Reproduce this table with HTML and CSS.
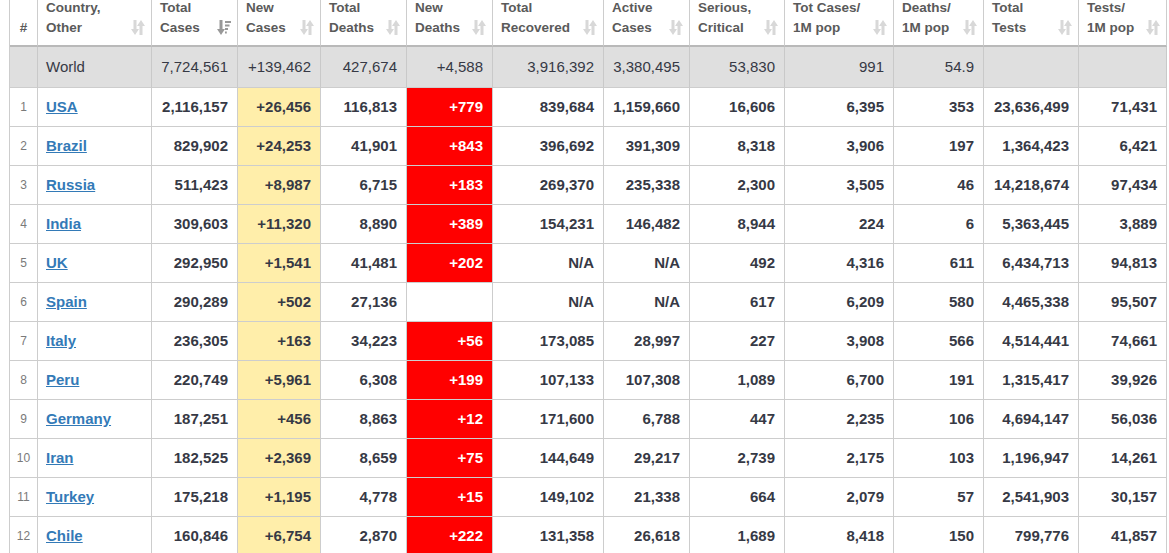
FILE: index.html
```html
<!DOCTYPE html>
<html lang="en">
<head>
<meta charset="utf-8">
<title>Coronavirus table</title>
<link rel="stylesheet" href="styles.css">
</head>
<body>
<div class="wrap">
<table class="cv">
<thead>
<tr>
  <th class="w-num num-h">#</th>
  <th class="w-country"><div class="hd"><span>Country,<br>Other</span><svg class="si" viewBox="0 0 14 15"><rect x="2.5" y="0" width="3" height="10"/><polygon points="0,9 8,9 4,15"/><polygon points="6,6 14,6 10,0"/><rect x="8.5" y="5" width="3" height="10"/></svg></div></th>
  <th class="w-86"><div class="hd"><span>Total<br>Cases</span><svg class="si sorted" viewBox="0 0 14 15"><rect x="2.5" y="0" width="3" height="10"/><polygon points="0,9 8,9 4,15"/><rect x="8" y="1" width="6" height="2"/><rect x="8" y="4.5" width="4.5" height="2"/><rect x="8" y="8" width="3" height="2"/><rect x="8" y="11.5" width="1.8" height="2"/></svg></div></th>
  <th class="w-83"><div class="hd"><span>New<br>Cases</span><svg class="si" viewBox="0 0 14 15"><rect x="2.5" y="0" width="3" height="10"/><polygon points="0,9 8,9 4,15"/><polygon points="6,6 14,6 10,0"/><rect x="8.5" y="5" width="3" height="10"/></svg></div></th>
  <th class="w-86"><div class="hd"><span>Total<br>Deaths</span><svg class="si" viewBox="0 0 14 15"><rect x="2.5" y="0" width="3" height="10"/><polygon points="0,9 8,9 4,15"/><polygon points="6,6 14,6 10,0"/><rect x="8.5" y="5" width="3" height="10"/></svg></div></th>
  <th class="w-86"><div class="hd"><span>New<br>Deaths</span><svg class="si" viewBox="0 0 14 15"><rect x="2.5" y="0" width="3" height="10"/><polygon points="0,9 8,9 4,15"/><polygon points="6,6 14,6 10,0"/><rect x="8.5" y="5" width="3" height="10"/></svg></div></th>
  <th class="w-111"><div class="hd"><span>Total<br>Recovered</span><svg class="si" viewBox="0 0 14 15"><rect x="2.5" y="0" width="3" height="10"/><polygon points="0,9 8,9 4,15"/><polygon points="6,6 14,6 10,0"/><rect x="8.5" y="5" width="3" height="10"/></svg></div></th>
  <th class="w-86"><div class="hd"><span>Active<br>Cases</span><svg class="si" viewBox="0 0 14 15"><rect x="2.5" y="0" width="3" height="10"/><polygon points="0,9 8,9 4,15"/><polygon points="6,6 14,6 10,0"/><rect x="8.5" y="5" width="3" height="10"/></svg></div></th>
  <th class="w-95"><div class="hd"><span>Serious,<br>Critical</span><svg class="si" viewBox="0 0 14 15"><rect x="2.5" y="0" width="3" height="10"/><polygon points="0,9 8,9 4,15"/><polygon points="6,6 14,6 10,0"/><rect x="8.5" y="5" width="3" height="10"/></svg></div></th>
  <th class="w-109"><div class="hd"><span>Tot&nbsp;Cases/<br>1M pop</span><svg class="si" viewBox="0 0 14 15"><rect x="2.5" y="0" width="3" height="10"/><polygon points="0,9 8,9 4,15"/><polygon points="6,6 14,6 10,0"/><rect x="8.5" y="5" width="3" height="10"/></svg></div></th>
  <th class="w-90"><div class="hd"><span>Deaths/<br>1M pop</span><svg class="si" viewBox="0 0 14 15"><rect x="2.5" y="0" width="3" height="10"/><polygon points="0,9 8,9 4,15"/><polygon points="6,6 14,6 10,0"/><rect x="8.5" y="5" width="3" height="10"/></svg></div></th>
  <th class="w-95"><div class="hd"><span>Total<br>Tests</span><svg class="si" viewBox="0 0 14 15"><rect x="2.5" y="0" width="3" height="10"/><polygon points="0,9 8,9 4,15"/><polygon points="6,6 14,6 10,0"/><rect x="8.5" y="5" width="3" height="10"/></svg></div></th>
  <th class="w-88"><div class="hd"><span>Tests/<br>1M pop</span><svg class="si" viewBox="0 0 14 15"><rect x="2.5" y="0" width="3" height="10"/><polygon points="0,9 8,9 4,15"/><polygon points="6,6 14,6 10,0"/><rect x="8.5" y="5" width="3" height="10"/></svg></div></th>
</tr>
</thead>
<tbody>
<tr class="world">
  <td class="rank"></td><td class="country">World</td><td>7,724,561</td><td>+139,462</td><td>427,674</td><td>+4,588</td><td>3,916,392</td><td>3,380,495</td><td>53,830</td><td>991</td><td>54.9</td><td></td><td></td>
</tr>
<tr><td class="rank">1</td><td class="country"><a href="#">USA</a></td><td>2,116,157</td><td class="nc">+26,456</td><td>116,813</td><td class="nd">+779</td><td>839,684</td><td>1,159,660</td><td>16,606</td><td>6,395</td><td>353</td><td>23,636,499</td><td>71,431</td></tr>
<tr><td class="rank">2</td><td class="country"><a href="#">Brazil</a></td><td>829,902</td><td class="nc">+24,253</td><td>41,901</td><td class="nd">+843</td><td>396,692</td><td>391,309</td><td>8,318</td><td>3,906</td><td>197</td><td>1,364,423</td><td>6,421</td></tr>
<tr><td class="rank">3</td><td class="country"><a href="#">Russia</a></td><td>511,423</td><td class="nc">+8,987</td><td>6,715</td><td class="nd">+183</td><td>269,370</td><td>235,338</td><td>2,300</td><td>3,505</td><td>46</td><td>14,218,674</td><td>97,434</td></tr>
<tr><td class="rank">4</td><td class="country"><a href="#">India</a></td><td>309,603</td><td class="nc">+11,320</td><td>8,890</td><td class="nd">+389</td><td>154,231</td><td>146,482</td><td>8,944</td><td>224</td><td>6</td><td>5,363,445</td><td>3,889</td></tr>
<tr><td class="rank">5</td><td class="country"><a href="#">UK</a></td><td>292,950</td><td class="nc">+1,541</td><td>41,481</td><td class="nd">+202</td><td>N/A</td><td>N/A</td><td>492</td><td>4,316</td><td>611</td><td>6,434,713</td><td>94,813</td></tr>
<tr><td class="rank">6</td><td class="country"><a href="#">Spain</a></td><td>290,289</td><td class="nc">+502</td><td>27,136</td><td></td><td>N/A</td><td>N/A</td><td>617</td><td>6,209</td><td>580</td><td>4,465,338</td><td>95,507</td></tr>
<tr><td class="rank">7</td><td class="country"><a href="#">Italy</a></td><td>236,305</td><td class="nc">+163</td><td>34,223</td><td class="nd">+56</td><td>173,085</td><td>28,997</td><td>227</td><td>3,908</td><td>566</td><td>4,514,441</td><td>74,661</td></tr>
<tr><td class="rank">8</td><td class="country"><a href="#">Peru</a></td><td>220,749</td><td class="nc">+5,961</td><td>6,308</td><td class="nd">+199</td><td>107,133</td><td>107,308</td><td>1,089</td><td>6,700</td><td>191</td><td>1,315,417</td><td>39,926</td></tr>
<tr><td class="rank">9</td><td class="country"><a href="#">Germany</a></td><td>187,251</td><td class="nc">+456</td><td>8,863</td><td class="nd">+12</td><td>171,600</td><td>6,788</td><td>447</td><td>2,235</td><td>106</td><td>4,694,147</td><td>56,036</td></tr>
<tr><td class="rank">10</td><td class="country"><a href="#">Iran</a></td><td>182,525</td><td class="nc">+2,369</td><td>8,659</td><td class="nd">+75</td><td>144,649</td><td>29,217</td><td>2,739</td><td>2,175</td><td>103</td><td>1,196,947</td><td>14,261</td></tr>
<tr><td class="rank">11</td><td class="country"><a href="#">Turkey</a></td><td>175,218</td><td class="nc">+1,195</td><td>4,778</td><td class="nd">+15</td><td>149,102</td><td>21,338</td><td>664</td><td>2,079</td><td>57</td><td>2,541,903</td><td>30,157</td></tr>
<tr><td class="rank">12</td><td class="country"><a href="#">Chile</a></td><td>160,846</td><td class="nc">+6,754</td><td>2,870</td><td class="nd">+222</td><td>131,358</td><td>26,618</td><td>1,689</td><td>8,418</td><td>150</td><td>799,776</td><td>41,857</td></tr>
</tbody>
</table>
</div>
</body>
</html>
```

FILE: styles.css
```css
html, body {
  margin: 0;
  padding: 0;
  background: #fff;
  overflow: hidden;
}

body {
  font-family: "Liberation Sans", Arial, Helvetica, sans-serif;
  color: #363945;
}

.wrap {
  padding-left: 9px;
}

.cv {
  margin-top: -2px;
  width: 1158px;
  table-layout: fixed;
  border-collapse: separate;
  border-spacing: 0;
  border-left: 1px solid #cdcdcd;
}

.cv th,
.cv td {
  box-sizing: border-box;
  border-right: 1px solid #cdcdcd;
  border-bottom: 1px solid #cdcdcd;
}

.cv th {
  font-size: 13.5px;
  line-height: 20px;
  font-weight: bold;
  color: #5a5a5a;
  text-align: left;
  vertical-align: bottom;
  padding: 0 6px 7px 8px;
  height: 49px;
  border-bottom: 2px solid #b9b9b9;
}

.cv th.num-h {
  text-align: center;
  padding: 0 0 7px 0;
}

.w-num { width: 28px; }
.w-country { width: 114px; }
.w-86 { width: 86px; }
.w-83 { width: 83px; }
.w-111 { width: 111px; }
.w-95 { width: 95px; }
.w-109 { width: 109px; }
.w-90 { width: 90px; }
.w-88 { width: 88px; }

.hd {
  display: flex;
  justify-content: space-between;
  align-items: flex-end;
}

.hd span {
  white-space: nowrap;
}

.si {
  width: 14px;
  height: 15px;
  flex: none;
  margin-bottom: 3px;
  fill: #d8d8d8;
}

.si.sorted {
  fill: #999999;
}

.cv td {
  font-size: 15px;
  font-weight: bold;
  text-align: right;
  vertical-align: middle;
  padding: 0 9px 1px 8px;
  height: 39px;
  white-space: nowrap;
}

.cv tr.world td {
  background: #dfdfdf;
  font-weight: normal;
  height: 41px;
  border-right-color: #c9c9c9;
}

.cv td.rank {
  font-size: 12px;
  font-weight: normal;
  color: #7a7a7a;
  text-align: center;
  padding: 0 0 1px 0;
}

.cv td.country {
  text-align: left;
}

.cv td.country a {
  color: #337ab7;
  text-decoration: underline;
}

.cv td.nc {
  background: #ffeeaa;
}

.cv td.nd {
  background: #ff0000;
  color: #fff;
}
```
